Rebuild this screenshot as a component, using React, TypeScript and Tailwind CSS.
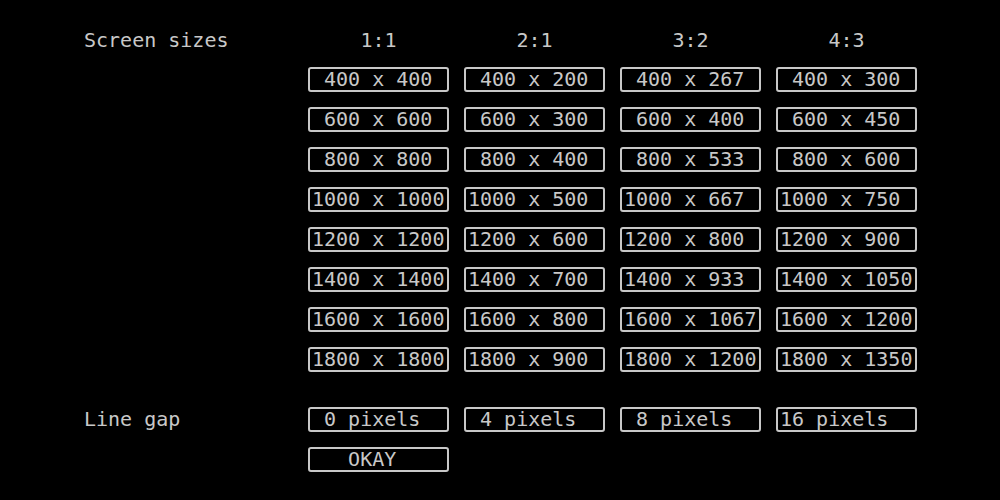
const ratios = [
  { name: "1:1", h: (w: number) => w },
  { name: "2:1", h: (w: number) => Math.round(w / 2) },
  { name: "3:2", h: (w: number) => Math.round((w * 2) / 3) },
  { name: "4:3", h: (w: number) => Math.round((w * 3) / 4) },
];

const widths = [400, 600, 800, 1000, 1200, 1400, 1600, 1800];
const gaps = [0, 4, 8, 16];

function Box({ label }: { label: string }) {
  return (
    <div className="w-[141px] h-[25px] border-2 border-[#c8c8c8] rounded-[3px] px-[2px] leading-[21px] whitespace-pre overflow-hidden">
      {label}
    </div>
  );
}

export default function App() {
  return (
    <div
      className="w-[1000px] h-[500px] bg-black text-[#c8c8c8] text-[20px] pt-[27px] pl-[84px] flex flex-col gap-[15px]"
      style={{ fontFamily: '"DejaVu Sans Mono", "Liberation Mono", monospace' }}
    >
      <div className="flex gap-[15px] h-[25px] items-center">
        <div className="w-[209px]">Screen sizes</div>
        {ratios.map((r) => (
          <div key={r.name} className="w-[141px] text-center">
            {r.name}
          </div>
        ))}
      </div>

      {widths.map((w) => (
        <div key={w} className="flex gap-[15px]">
          <div className="w-[209px]" />
          {ratios.map((r) => (
            <Box key={r.name} label={`${String(w).padStart(4, " ")} x ${r.h(w)}`} />
          ))}
        </div>
      ))}

      <div className="flex gap-[15px] items-center mt-[20px]">
        <div className="w-[209px] leading-[25px]">Line gap</div>
        {gaps.map((g) => (
          <Box key={g} label={`${String(g).padStart(2, " ")} pixels`} />
        ))}
      </div>

      <div className="flex gap-[15px]">
        <div className="w-[209px]" />
        <Box label="   OKAY" />
      </div>
    </div>
  );
}
